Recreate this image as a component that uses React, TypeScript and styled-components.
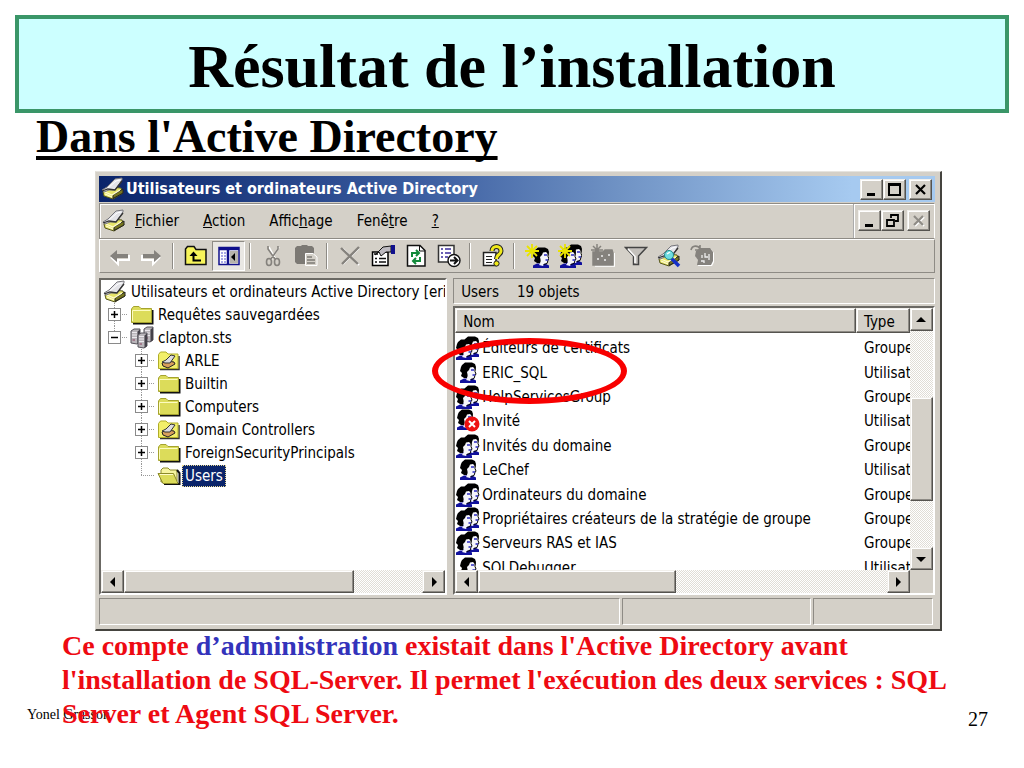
import React from 'react';
import styled, { createGlobalStyle, css } from 'styled-components';

const face = '#d4d0c8';
const dark = '#6b6964';
const shade = '#8e8b85';

const GlobalStyle = createGlobalStyle`
  *, *::before, *::after { box-sizing: border-box; }
  body { margin: 0; background: #fff; }
`;

const raised = css`
  border: 1px solid;
  border-color: #f2f0ec #55534f #55534f #f2f0ec;
  box-shadow: inset -1px -1px 0 ${shade}, inset 1px 1px 0 #fff;
`;

const sunken = css`
  border: 2px solid;
  border-color: ${dark} #fff #fff ${dark};
`;

const Slide = styled.main`
  min-height: 100vh;
  padding: 15px 15px 0;
  color: #000;
  font-family: "Liberation Serif", "Times New Roman", serif;
  overflow: hidden;
`;

const Banner = styled.h1`
  margin: 0;
  height: 98px;
  display: flex;
  align-items: center;
  justify-content: center;
  border: 4px solid #3a9668;
  background: #ccffff;
  font-size: 62px;
  line-height: 72px;
  padding-top: 4px;
`;

const Heading = styled.h2`
  margin: 0 0 0 21px;
  height: 58px;
  font-size: 46px;
  line-height: 48px;
  text-decoration: underline;
  text-decoration-thickness: 4px;
  text-underline-offset: 4px;
  text-decoration-skip-ink: none;
`;

const Window = styled.section`
  position: relative;
  margin: 0 67px 0 80px;
  padding: 4px 5px 4px 3px;
  background: ${face};
  border: 1px solid;
  border-color: #e6e4df #45443f #45443f #dddad3;
  border-bottom-width: 2px;
  border-right-width: 2px;
  font-family: "DejaVu Sans Condensed", "Noto Sans", sans-serif;
  font-size: 15px;
  line-height: 20px;
`;

const TitleBar = styled.header`
  height: 26px;
  padding: 0 3px 0 2px;
  display: flex;
  align-items: center;
  background: linear-gradient(90deg, #0a246a, #3a5c9f 38%, #6f92c4 62%, #a6caf0 90%);
  color: #fff;
`;

const WindowTitle = styled.h3`
  flex: 1;
  margin: 0 0 0 1px;
  font-size: 16px;
  line-height: 20px;
  white-space: nowrap;
`;

const ButtonSet = styled.div`
  display: flex;
`;

const CaptionButton = styled.button<{ $apart?: boolean }>`
  ${raised}
  width: 23px;
  height: 21px;
  padding: 0;
  margin-left: ${p => (p.$apart ? 3 : 0)}px;
  background: ${face};
  display: grid;
  place-items: center;
`;

const MenuRow = styled.div`
  height: 36px;
  margin-top: 1px;
  display: flex;
  align-items: stretch;
  border: 1px solid;
  border-color: ${shade} #fff ${shade} ${shade};
  box-shadow: inset 1px 1px 0 #fff;
`;

const Menu = styled.nav`
  flex: 1;
  display: flex;
  align-items: center;
  gap: 9px;
  padding-left: 2px;
`;

const MenuItems = styled.div`
  display: flex;
  gap: 24px;
`;

const MenuItem = styled.button`
  border: 0;
  padding: 0;
  background: none;
  font: inherit;
  color: #000;
`;

const ChildControls = styled.div`
  display: flex;
  align-items: center;
  padding: 0 4px 2px 3px;
  border-left: 2px groove #fff;
`;

const Toolbar = styled.div`
  height: 34px;
  display: flex;
  align-items: center;
  padding-left: 2px;
  border: 1px solid;
  border-color: #fff ${shade} ${shade} #fff;
  overflow: hidden;
`;

const ToolButton = styled.button<{ $pressed?: boolean }>`
  flex: none;
  width: 33px;
  height: 30px;
  padding: 0;
  display: grid;
  place-items: center;
  background: ${p => (p.$pressed ? '#e9e7e3' : 'none')};
  border: 1px solid;
  border-color: ${p => (p.$pressed ? '#8e8b85 #fff #fff #8e8b85' : 'transparent')};
`;

const ToolSeparator = styled.span`
  flex: none;
  width: 2px;
  height: 26px;
  margin: 0 5px 0 4px;
  background: linear-gradient(90deg, ${shade} 50%, #fff 50%);
`;

const Panes = styled.div`
  display: grid;
  grid-template-columns: minmax(0, 349fr) minmax(0, 483fr);
  grid-template-rows: minmax(0, 1fr);
  gap: 6px;
  height: 317px;
  margin-top: 5px;
`;

const TreePane = styled.div`
  ${sunken}
  min-width: 0;
  background: #fff;
  display: flex;
  flex-direction: column;
`;

const Tree = styled.ul`
  flex: 1;
  margin: 0;
  padding: 0;
  list-style: none;
  overflow: hidden;
`;

const TreeRow = styled.li`
  display: flex;
  align-items: center;
  height: 23px;
  white-space: nowrap;
`;

const dotsV = 'repeating-linear-gradient(180deg, #999 0 1px, transparent 1px 2px)';
const dotsH = 'repeating-linear-gradient(90deg, #999 0 1px, transparent 1px 2px)';

const Branch = styled.span<{ $kind: 'mid' | 'end' | 'blank' }>`
  flex: none;
  width: 27px;
  height: 23px;
  display: grid;
  place-items: center;
  ${p => p.$kind !== 'blank' && css`
    background:
      ${dotsV} 13px 0 / 1px ${p.$kind === 'end' ? '12px' : '23px'} no-repeat,
      ${dotsH} 13px 11px / 14px 1px no-repeat;
  `}
`;

const Expander = styled.button`
  width: 13px;
  height: 13px;
  padding: 0;
  border: 1px solid #8a8a8a;
  background: #fff;
  display: grid;
  place-items: center;
`;

const TreeIcon = styled.span`
  flex: none;
  width: 27px;
  height: 23px;
  display: grid;
  place-items: center;
`;

const TreeLabel = styled.span<{ $selected?: boolean }>`
  padding: 0 2px;
  border: 1px dotted ${p => (p.$selected ? '#e8d890' : 'transparent')};
  background: ${p => (p.$selected ? '#0a246a' : 'none')};
  color: ${p => (p.$selected ? '#fff' : '#000')};
`;

const ResultPane = styled.div`
  display: flex;
  flex-direction: column;
  min-width: 0;
`;

const ResultHeader = styled.div`
  height: 26px;
  margin-bottom: 2px;
  padding: 1px 0 0 7px;
  display: flex;
  gap: 18px;
  border: 1px solid;
  border-color: ${shade} #fff #fff ${shade};
  line-height: 24px;
`;

const ListFrame = styled.div`
  ${sunken}
  flex: 1;
  min-height: 0;
  display: grid;
  grid-template-columns: minmax(0, 1fr) 23px;
  grid-template-rows: minmax(0, 1fr) 23px;
  background: ${face};
`;

const ListView = styled.div`
  min-height: 0;
  background: #fff;
  overflow: hidden;
`;

const ObjectTable = styled.table`
  width: 100%;
  height: 272px;
  table-layout: fixed;
  border-collapse: separate;
  border-spacing: 0;
  tbody::before {
    content: '';
    display: block;
    height: 3px;
  }
`;

const Th = styled.th<{ $narrow?: boolean }>`
  ${raised}
  width: ${p => (p.$narrow ? '54px' : 'auto')};
  height: 25px;
  padding: 2px 0 0 7px;
  background: ${face};
  text-align: left;
  font-weight: 400;
`;

const Td = styled.td<{ $type?: boolean }>`
  padding: 0 0 0 ${p => (p.$type ? 8 : 1)}px;
  white-space: nowrap;
  overflow: hidden;
`;

const ObjectName = styled.span`
  display: flex;
  align-items: center;
  gap: 2px;
  height: 24px;
`;

const Scrollbar = styled.div<{ $vertical?: boolean }>`
  display: flex;
  flex-direction: ${p => (p.$vertical ? 'column' : 'row')};
  height: ${p => (p.$vertical ? 'auto' : '23px')};
  background: repeating-conic-gradient(#fff 0 25%, #e0ddd6 0 50%) 0 0 / 2px 2px;
`;

const ScrollButton = styled.button`
  ${raised}
  flex: none;
  width: 23px;
  height: 23px;
  padding: 0;
  background: ${face};
  display: grid;
  place-items: center;
`;

const Thumb = styled.div<{ $share: number }>`
  ${raised}
  flex: ${p => p.$share} 1 0;
  background: ${face};
`;

const Trough = styled.div<{ $share: number }>`
  flex: ${p => p.$share} 1 0;
`;

const StatusBar = styled.footer`
  display: grid;
  grid-template-columns: 522fr 190fr 120fr;
  gap: 2px;
  height: 27px;
  margin: 3px 2px 0 0;
`;

const StatusCell = styled.div`
  border: 1px solid;
  border-color: ${shade} #fff #fff ${shade};
`;

const Highlight = styled.div`
  position: absolute;
  left: 336px;
  top: 166px;
  width: 195px;
  height: 66px;
  border: 6px solid #f80000;
  border-radius: 50%;
  pointer-events: none;
`;

const Comment = styled.p`
  position: relative;
  z-index: 1;
  margin: -2px 40px 0 47px;
  color: #ee0a12;
  font-size: 28px;
  font-weight: 700;
  line-height: 34px;
`;

const Term = styled.span`
  color: #3333bb;
`;

const SlideFooter = styled.footer`
  display: flex;
  justify-content: space-between;
  align-items: flex-start;
  margin: -28px 21px 0 12px;
  font-size: 14px;
  line-height: 24px;
`;

const PageNumber = styled.span`
  font-size: 20px;
  line-height: 32px;
`;

function Svg({ w = 24, h = 24, children }: { w?: number; h?: number; children: React.ReactNode }) {
  return <svg width={w} height={h} viewBox={`0 0 ${w} ${h}`} aria-hidden="true">{children}</svg>;
}

const ConsoleArt = () => (
  <>
    <path d="M2 15 L9 10 L20 11 L22 16 L12 22 L3 19z" fill="#e6e46a" stroke="#55551c" />
    <path d="M12 21.500 L22 16 V12 L12 18z" fill="#77761e" stroke="#222" />
    <path d="M4 15 L11 18 L19 13 M4 17 L11 20" fill="none" stroke="#fffbd0" strokeWidth="1.300" />
    <path d="M1 13 L6 10 L14 2 L21 1 L21 3 L14 13 L8 13 L3 15z" fill="#e3e3e8" stroke="#77777d" />
    <path d="M1 14 L7 12 L14 13 L21 4" fill="none" stroke="#333" strokeWidth="1.300" />
    <path d="M7 11 L15 4 L19 3" fill="none" stroke="#fff" />
  </>
);
const ConsoleIcon = () => <Svg><ConsoleArt /></Svg>;

const FolderIcon = () => (
  <Svg>
    <path d="M3 20.500 H22.500 V7" fill="none" stroke="#111" strokeWidth="2" />
    <path d="M1.500 6 L3.500 3.500 H9 L11 5.500 H21.500 V19.500 H1.500z" fill="#dcdc5a" stroke="#a5a32e" />
    <path d="M2.500 18 V7.500 H20.500" fill="none" stroke="#fdfcc0" />
  </Svg>
);

const OuIcon = () => (
  <Svg>
    <path d="M3 20.500 H22 V7" fill="none" stroke="#333" strokeWidth="1.500" />
    <path d="M1.500 5.500 L3.500 3 H9 L11 5 H21 V19.500 H1.500z" fill="#f2ef6a" stroke="#b0ad28" />
    <path d="M5 14 L10 12 L17 13 L18 15 L11 19 L6 17z" fill="#d8a05c" stroke="#222" />
    <path d="M5 13 L9 11 L14 6 L18 7 L13 14 L8 14z" fill="#dcdce0" stroke="#333" />
  </Svg>
);

const OpenFolderIcon = () => (
  <Svg>
    <path d="M4 18 V6 L6 4 H11 L13 6 H20 V17z" fill="#f6f4a0" stroke="#8c8a2a" />
    <path d="M20 6 L22.500 9 V20 H7" fill="none" stroke="#111" strokeWidth="2" />
    <path d="M1 9.500 H16.500 L21 19.500 H6z" fill="#dcdc5a" stroke="#8c8a2a" />
    <path d="M3 10.500 H16" stroke="#fffcc8" />
  </Svg>
);

const DomainIcon = () => (
  <Svg>
    {[[1, 3], [14, 1], [8, 7]].map(([x, y]) => (
      <g key={x} transform={`translate(${x} ${y})`}>
        <path d="M0 2 L3 0 H9 V13 L6 15 L0 14z" fill="#b9b6ba" stroke="#55525a" />
        <path d="M6.500 2.500 L9 .500 V13 L6.500 15z" fill="#444149" />
        <path d="M1 3.500 H6 M1 6 H6 M1 8.500 H6" stroke="#ece9ee" />
        <path d="M1.500 11 H4" stroke="#8b3d5c" />
      </g>
    ))}
  </Svg>
);

const PersonArt = ({ x = 0, y = 0 }: { x?: number; y?: number }) => (
  <g transform={`translate(${x} ${y})`}>
    <path d="M0 21 V18.500 L4 16.500 H12 L16 18.500 V21z" fill="#10109c" />
    <path d="M1 5 L2 3 L5 0.500 H12 L15 2 L16 5 L15.500 8 L13 11 L8 13 L7 16 H4 L1 14 L2 11 L0 9z" fill="#000" />
    <path d="M7 10 L9 8 L10 5.500 L13 5 L15 7 L15 10 L16 12 L15 13 L14 16 L11 17 L10 19 L6 18 L8 15z" fill="#f5f5fa" />
    <path d="M15 6 V9.500 L16 12 L15 13.500 L14 16.500 L10.500 17.500" fill="none" stroke="#000" />
    <path d="M11 8 H14 M12.500 13 H15" fill="none" stroke="#2a2ac0" strokeWidth="1.500" />
  </g>
);

const UserIcon = () => <Svg><PersonArt x={4} y={1} /></Svg>;
const GroupIcon = () => <Svg><PersonArt x={7} /><PersonArt y={3} /></Svg>;
const DisabledUserIcon = () => (
  <Svg>
    <PersonArt x={1} y={0} />
    <circle cx="16" cy="15" r="7.500" fill="#ee1111" />
    <path d="M13 12 L19 18 M19 12 L13 18" stroke="#fff" strokeWidth="2" />
  </Svg>
);

const Spark = () => (
  <path d="M7 0 V14 M0 7 H14 M2 2 L12 12 M12 2 L2 12" stroke="#e9e400" strokeWidth="1.800" fill="none" />
);

const ArrowIcon = ({ back }: { back?: boolean }) => (
  <Svg>
    <g transform={back ? undefined : 'translate(24 0) scale(-1 1)'}>
      <path d="M4 13 L11 20 V16 H22 V11" fill="none" stroke="#fff" strokeWidth="2" />
      <path d="M3 12 L10 6 V10 H21 V14 H10 V18z" fill="#85827d" />
    </g>
  </Svg>
);
const UpIcon = () => (
  <Svg>
    <path d="M1.500 20.500 V5 L3.500 2.500 H10 L12 5.500 H22 V20.500z" fill="#f7f45a" stroke="#111" strokeWidth="1.500" />
    <path d="M9.500 11 V16.500 H17" fill="none" stroke="#000" strokeWidth="2" />
    <path d="M5.500 12 L9.500 7.500 L13.500 12z" fill="#000" />
  </Svg>
);
const PanesIcon = () => (
  <Svg>
    <rect x="2" y="3.500" width="20" height="17" fill="#fff" stroke="#10108c" strokeWidth="1.500" />
    <path d="M2 5 H22 M11 4 V20" stroke="#10108c" strokeWidth="2.500" />
    <rect x="13" y="7" width="8" height="12.500" fill="#b7b4ac" />
    <path d="M4 9 H9 M4 12 H9 M4 15 H9 M4 18 H9" stroke="#55c" strokeDasharray="2 1" />
    <path d="M18 9 V17 L14 13z" fill="#000" />
  </Svg>
);
const CutIcon = () => (
  <Svg>
    <g fill="none" strokeWidth="1.600">
      <path d="M8 3 L15 16 M18 3 L10 16" stroke="#fff" />
      <g stroke="#85827d">
        <path d="M7 2 V5 L14 15 M17 2 V5 L10 15" />
        <ellipse cx="8" cy="18" rx="2.500" ry="3.500" />
        <ellipse cx="16" cy="18" rx="2.500" ry="3.500" />
      </g>
    </g>
  </Svg>
);
const PasteIcon = () => (
  <Svg>
    <path d="M1 4 L3 2 H7 L8 1 H13 L14 2 H18 L20 4 V18 L18 20 H3 L1 18z" fill="#7c7974" />
    <path d="M11.500 9.500 H19 L23 13 V21.500 H11.500z" fill="#d4d0c8" stroke="#fff" />
    <path d="M13 13 H18 M13 16 H21 M13 19 H21" stroke="#7c7974" strokeWidth="1.500" />
  </Svg>
);
const DeleteIcon = () => (
  <Svg>
    <path d="M5 5 L21 21 M21 4 L5 20" stroke="#fff" strokeWidth="2" />
    <path d="M3 4 L20 20 M21 3 L4 20" stroke="#85827d" strokeWidth="2.400" />
  </Svg>
);
const PropertiesIcon = () => (
  <Svg>
    <path d="M1.500 8 H17 V21.500 H1.500z" fill="#fff" stroke="#000" strokeWidth="1.500" />
    <path d="M4 14.500 H6 M8 14.500 H15 M4 18 H6 M8 18 H15 M3 10 H7" stroke="#111" strokeWidth="1.500" />
    <path d="M4 11 L12 3 L20 2 V8 L15 8 L10 12 L8 8z" fill="#bdbac0" stroke="#111" />
    <path d="M20 1 H24 V10 H20z" fill="#10108c" />
  </Svg>
);
const RefreshIcon = () => (
  <Svg>
    <path d="M3.500 1.500 H16 L21 6.500 V22 H3.500z" fill="#fff" stroke="#111" strokeWidth="1.500" />
    <path d="M15.500 1.500 V7 H21" fill="none" stroke="#111" />
    <g fill="none" stroke="#128a3a" strokeWidth="2">
      <path d="M8 13 V9 H14 M12 6 L15 9 L12 12" />
      <path d="M16 13 V17 H10 M12 14 L9 17 L12 20" />
    </g>
  </Svg>
);
const ExportIcon = () => (
  <Svg>
    <path d="M1.500 1.500 H17 V18 H1.500z" fill="#fff" stroke="#333" strokeWidth="1.500" />
    <path d="M4 5 H6 M8 5 H14 M4 9 H6 M8 9 H14 M4 13 H6 M8 13 H11" stroke="#3a2c9c" strokeWidth="1.700" />
    <circle cx="17" cy="16.500" r="6" fill="#fff" stroke="#111" strokeWidth="1.400" />
    <path d="M13 16.500 H20 M17 13 L20.500 16.500 L17 20" fill="none" stroke="#111" strokeWidth="2" />
  </Svg>
);
const HelpIcon = () => (
  <Svg>
    <path d="M2.500 8.500 H15 V21.500 H2.500z" fill="#fff" stroke="#222" strokeWidth="1.500" />
    <path d="M5 12.500 H11 M5 15.500 H11 M5 18.500 H11" stroke="#222" />
    <path d="M11 7 C11 1 20 1 20 7 C20 11 15.500 10 15.500 15" fill="none" stroke="#222" strokeWidth="5" />
    <path d="M11 7 C11 1 20 1 20 7 C20 11 15.500 10 15.500 15" fill="none" stroke="#efe91a" strokeWidth="3" />
    <circle cx="15.500" cy="19.500" r="2.600" fill="#efe91a" stroke="#222" />
  </Svg>
);
const NewUserIcon = () => <Svg><PersonArt x={8} y={3} /><Spark /></Svg>;
const NewGroupIcon = () => <Svg><PersonArt x={8} y={0} /><PersonArt x={2} y={3} /><Spark /></Svg>;
const NewOuIcon = () => (
  <Svg>
    <path d="M4 22 H23.500 V9" fill="none" stroke="#fff" strokeWidth="1.500" />
    <path d="M2 8 H12 L14 6 H21 L22 9 V21 H2z M6 0 V12 M0 6 H12 M2 2 L10 10 M10 2 L2 10" fill="#85827d" stroke="#85827d" strokeWidth="1.500" />
    <path d="M6 15 H8 M10 12 H12 M13 16 H15 M17 11 H19" stroke="#eee" strokeWidth="1.500" />
  </Svg>
);
const FilterIcon = () => (
  <Svg>
    <path d="M1.500 3.500 H22.500 L14.500 12 V20.500 H9.500 V12z" fill="#c4c1bc" stroke="#444" strokeWidth="1.500" />
    <path d="M4 5 L11 12.500 V19" fill="none" stroke="#fff" strokeWidth="1.500" />
  </Svg>
);
const FindIcon = () => (
  <Svg>
    <ConsoleArt />
    <path d="M14 14 L22 22" stroke="#1530c8" strokeWidth="3.500" />
    <circle cx="12" cy="11" r="4.500" fill="#6fdde2" stroke="#288" />
    <path d="M10 10 L13 8" stroke="#fff" strokeWidth="1.500" />
  </Svg>
);
const AddToGroupIcon = () => (
  <Svg>
    <path d="M1 6 C2 1 8 1 10 5 M10 1 V6 H5" fill="none" stroke="#85827d" strokeWidth="1.600" />
    <path d="M7 8 L11 5 H21 L24 9 V18 L22 22 H8 L9 17 L6 13z" fill="#fff" />
    <path d="M6 7 L10 4 H20 L23 8 V17 L21 21 H7 L8 16 L5 12z" fill="#85827d" />
    <path d="M12 11 V14 M15 9 V13 H18 M11 17 H14 V19 M19 10 V16" fill="none" stroke="#eee" strokeWidth="1.300" />
  </Svg>
);

const MinimizeIcon = () => <Svg w={17} h={15}><path d="M4 12.500 H12" stroke="#000" strokeWidth="3" /></Svg>;
const MaximizeIcon = () => (
  <Svg w={17} h={15}><path d="M3 2 H14 V13 H3z M3 3 H14" fill="none" stroke="#000" strokeWidth="2" /></Svg>
);
const RestoreIcon = () => (
  <Svg w={17} h={15}>
    <path d="M7 5 V2 H14 V8 H11 M3 7 H10 V13 H3z" fill="none" stroke="#000" strokeWidth="1.800" />
  </Svg>
);
const CloseIcon = ({ color = '#000' }: { color?: string }) => (
  <Svg w={17} h={15}>
    {color !== '#000' && <path d="M5 4 L14 13 M14 4 L5 13" stroke="#fff" strokeWidth="2" />}
    <path d="M4 3 L13 12 M13 3 L4 12" stroke={color} strokeWidth="2.200" />
  </Svg>
);

const arrows = {
  left: 'M9 2 V12 L4 7z',
  right: 'M5 2 V12 L10 7z',
  up: 'M2 9 H12 L7 4z',
  down: 'M2 5 H12 L7 10z',
};
const Scroll = ({ dir }: { dir: keyof typeof arrows }) => (
  <ScrollButton aria-label={`Scroll ${dir}`}>
    <Svg w={14} h={14}><path d={arrows[dir]} fill="#000" /></Svg>
  </ScrollButton>
);

const menus = [
  ['', 'F', 'ichier'],
  ['', 'A', 'ction'],
  ['Affic', 'h', 'age'],
  ['Fenê', 't', 're'],
  ['', '?', ''],
];

type Tool = { name: string; icon: React.ReactNode; pressed?: boolean };
const tools: Tool[][] = [
  [{ name: 'Précédent', icon: <ArrowIcon back /> }, { name: 'Suivant', icon: <ArrowIcon /> }],
  [{ name: 'Dossier parent', icon: <UpIcon /> }, { name: 'Arborescence', icon: <PanesIcon />, pressed: true }],
  [{ name: 'Couper', icon: <CutIcon /> }, { name: 'Coller', icon: <PasteIcon /> }],
  [
    { name: 'Supprimer', icon: <DeleteIcon /> },
    { name: 'Propriétés', icon: <PropertiesIcon /> },
    { name: 'Actualiser', icon: <RefreshIcon /> },
    { name: 'Exporter', icon: <ExportIcon /> },
  ],
  [{ name: 'Aide', icon: <HelpIcon /> }],
  [
    { name: 'Nouvel utilisateur', icon: <NewUserIcon /> },
    { name: 'Nouveau groupe', icon: <NewGroupIcon /> },
    { name: 'Nouvelle unité', icon: <NewOuIcon /> },
    { name: 'Filtrer', icon: <FilterIcon /> },
    { name: 'Rechercher', icon: <FindIcon /> },
    { name: 'Ajouter au groupe', icon: <AddToGroupIcon /> },
  ],
];

type Node = { label: string; level: number; icon: React.ReactNode; state?: 'plus' | 'minus'; end?: boolean; selected?: boolean };
const nodes: Node[] = [
  { label: 'Utilisateurs et ordinateurs Active Directory [eric', level: 0, icon: <ConsoleIcon /> },
  { label: 'Requêtes sauvegardées', level: 1, icon: <FolderIcon />, state: 'plus' },
  { label: 'clapton.sts', level: 1, icon: <DomainIcon />, state: 'minus', end: true },
  { label: 'ARLE', level: 2, icon: <OuIcon />, state: 'plus' },
  { label: 'Builtin', level: 2, icon: <FolderIcon />, state: 'plus' },
  { label: 'Computers', level: 2, icon: <FolderIcon />, state: 'plus' },
  { label: 'Domain Controllers', level: 2, icon: <OuIcon />, state: 'plus' },
  { label: 'ForeignSecurityPrincipals', level: 2, icon: <FolderIcon />, state: 'plus' },
  { label: 'Users', level: 2, icon: <OpenFolderIcon />, end: true, selected: true },
];

const objects: [string, string, 'group' | 'user' | 'disabled'][] = [
  ['Éditeurs de certificats', 'Groupe', 'group'],
  ['ERIC_SQL', 'Utilisateur', 'user'],
  ['HelpServicesGroup', 'Groupe', 'group'],
  ['Invité', 'Utilisateur', 'disabled'],
  ['Invités du domaine', 'Groupe', 'group'],
  ['LeChef', 'Utilisateur', 'user'],
  ['Ordinateurs du domaine', 'Groupe', 'group'],
  ['Propriétaires créateurs de la stratégie de groupe', 'Groupe', 'group'],
  ['Serveurs RAS et IAS', 'Groupe', 'group'],
  ['SQLDebugger', 'Utilisateur', 'user'],
];
const objectIcons = { group: <GroupIcon />, user: <UserIcon />, disabled: <DisabledUserIcon /> };

function TreeItem({ node }: { node: Node }) {
  return (
    <TreeRow>
      {node.level === 2 && <Branch $kind="blank" />}
      {node.level > 0 && (
        <Branch $kind={node.end ? 'end' : 'mid'}>
          {node.state && (
            <Expander aria-label={node.label}>
              <Svg w={9} h={9}>
                <path d={node.state === 'plus' ? 'M1 4.500 H8 M4.500 1 V8' : 'M1 4.500 H8'} stroke="#000" strokeWidth="1.500" />
              </Svg>
            </Expander>
          )}
        </Branch>
      )}
      <TreeIcon>{node.icon}</TreeIcon>
      <TreeLabel $selected={node.selected}>{node.label}</TreeLabel>
    </TreeRow>
  );
}

export default function App() {
  return (
    <Slide>
      <GlobalStyle />
      <Banner>Résultat de l’installation</Banner>
      <Heading>Dans l'Active Directory</Heading>

      <Window>
        <TitleBar>
          <ConsoleIcon />
          <WindowTitle>Utilisateurs et ordinateurs Active Directory</WindowTitle>
          <ButtonSet>
            <CaptionButton aria-label="Réduire"><MinimizeIcon /></CaptionButton>
            <CaptionButton aria-label="Agrandir"><MaximizeIcon /></CaptionButton>
            <CaptionButton aria-label="Fermer" $apart><CloseIcon /></CaptionButton>
          </ButtonSet>
        </TitleBar>

        <MenuRow>
          <Menu>
            <ConsoleIcon />
            <MenuItems>
              {menus.map(([before, key, after]) => (
                <MenuItem key={before + key}>{before}<u>{key}</u>{after}</MenuItem>
              ))}
            </MenuItems>
          </Menu>
          <ChildControls>
            <CaptionButton aria-label="Réduire la console"><MinimizeIcon /></CaptionButton>
            <CaptionButton aria-label="Restaurer la console"><RestoreIcon /></CaptionButton>
            <CaptionButton aria-label="Fermer la console" $apart><CloseIcon color="#8e8b85" /></CaptionButton>
          </ChildControls>
        </MenuRow>

        <Toolbar>
          {tools.map((group, i) => (
            <React.Fragment key={i}>
              {i > 0 && <ToolSeparator />}
              {group.map(t => (
                <ToolButton key={t.name} aria-label={t.name} $pressed={t.pressed}>{t.icon}</ToolButton>
              ))}
            </React.Fragment>
          ))}
        </Toolbar>

        <Panes>
          <TreePane>
            <Tree>{nodes.map(n => <TreeItem key={n.label} node={n} />)}</Tree>
            <Scrollbar>
              <Scroll dir="left" />
              <Thumb $share={229} />
              <Trough $share={69} />
              <Scroll dir="right" />
            </Scrollbar>
          </TreePane>

          <ResultPane>
            <ResultHeader><span>Users</span><span>19 objets</span></ResultHeader>
            <ListFrame>
              <ListView>
                <ObjectTable>
                  <thead><tr><Th>Nom</Th><Th $narrow>Type</Th></tr></thead>
                  <tbody>
                    {objects.map(([name, type, kind]) => (
                      <tr key={name}>
                        <Td><ObjectName>{objectIcons[kind]}{name}</ObjectName></Td>
                        <Td $type>{type}</Td>
                      </tr>
                    ))}
                  </tbody>
                </ObjectTable>
              </ListView>
              <Scrollbar $vertical>
                <Scroll dir="up" />
                <Trough $share={67} />
                <Thumb $share={103} />
                <Trough $share={46} />
                <Scroll dir="down" />
              </Scrollbar>
              <Scrollbar>
                <Scroll dir="left" />
                <Thumb $share={197} />
                <Trough $share={213} />
                <Scroll dir="right" />
              </Scrollbar>
            </ListFrame>
          </ResultPane>
        </Panes>

        <StatusBar><StatusCell /><StatusCell /><StatusCell /></StatusBar>
        <Highlight />
      </Window>

      <Comment>
        Ce compte <Term>d’administration</Term> existait dans l'Active Directory avant
        l'installation de SQL-Server. Il permet l'exécution des deux services : SQL
        Server et Agent SQL Server.
      </Comment>
      <SlideFooter>
        <span>Yonel Grusson</span>
        <PageNumber>27</PageNumber>
      </SlideFooter>
    </Slide>
  );
}
